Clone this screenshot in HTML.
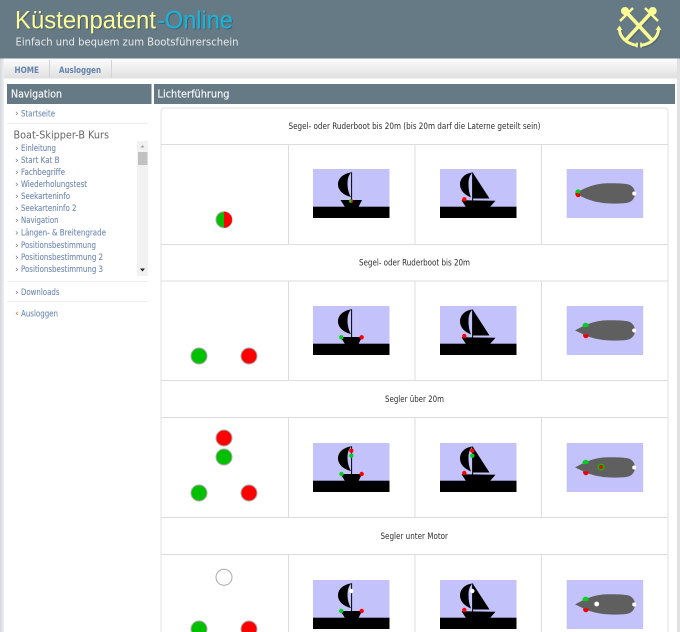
<!DOCTYPE html>
<html lang="de"><head><meta charset="utf-8"><title>Küstenpatent-Online</title>
<style>
html,body{margin:0;padding:0;background:#fff;overflow:hidden}
svg{display:block;position:absolute;left:0;top:0}
text{font-family:"DejaVu Sans","Liberation Sans",sans-serif}
.n{font-size:9px;fill:#7089b2;stroke:#7089b2;stroke-width:.12px}
.t{font-size:9px;fill:#2c2c2c}
.a{font-size:9px;fill:#777}
</style></head><body>
<svg width="680" height="632" viewBox="0 0 680 632" xmlns="http://www.w3.org/2000/svg">
<defs>
<linearGradient id="nav" x1="0" y1="0" x2="0" y2="1"><stop offset="0" stop-color="#fbfbfb"/><stop offset="1" stop-color="#dfdfdf"/></linearGradient>
<linearGradient id="side" x1="0" y1="0" x2="1" y2="0"><stop offset="0" stop-color="#d4d8dc"/><stop offset="1" stop-color="#eef0f1"/></linearGradient>
<g id="side1">
<rect width="76.5" height="49" fill="#c4c2fb"/>
<rect y="37.7" width="76.5" height="11.3" fill="#000"/>
<path d="M27.5 31H49L45.5 38H32Z" fill="#000"/>
<path d="M38.5 3.3C29 5 25 10 25 15.5C25 21.5 31 26.5 38 28C35.5 24 34.5 19 34.5 15C34.5 10 35.5 6 38.5 3.3Z" fill="#000"/>
<path d="M38.6 3.3V31.5" stroke="#000" stroke-width="1"/>
</g>
<g id="side2">
<rect width="76.5" height="49" fill="#c4c2fb"/>
<rect y="37.7" width="76.5" height="11.3" fill="#000"/>
<path d="M21.5 31.3L55.5 31.8L50 38H26Z" fill="#000"/>
<path d="M32.5 3.5C24 4.5 20 10 20 15.5C20 21 24 25.5 31 28.5C29 24 28.5 19.5 28.5 15C28.5 10 29.5 6.5 32.5 3.5Z" fill="#000"/>
<path d="M33 4L49.5 29.5H33Z" fill="#000"/>
<path d="M32.6 3.5V32" stroke="#000" stroke-width="1"/>
</g>
<g id="top">
<rect width="76.5" height="49" fill="#c4c2fb"/>
<path d="M8.3 24.4C13 22 18 19 23 17.5C29 15.5 34 14.5 41 14.3C48 14 56 14.4 61 15.2C65.5 16.2 68.3 20 68.3 24.4C68.3 29 65.5 32.5 61.5 33.6C55 34.8 47 34.7 40 34.3C33 33.8 28 32.5 23 31C18 29.5 13 26.5 8.3 24.4Z" fill="#5f5f5f"/>
<circle cx="67.5" cy="24.5" r="2" fill="#fff"/>
</g>
<g id="bow">
<path d="M19.3 16.8A2.8 2.8 0 0 1 21.8 20.6L16.6 21.4A2.8 2.8 0 0 1 19.3 16.8Z" fill="#00d020"/>
<path d="M16.6 28.4L21.8 28.4A2.8 2.8 0 0 1 19.3 32.2A2.8 2.8 0 0 1 16.6 28.4Z" fill="#f00000"/>
</g>
<g id="bow0">
<path d="M11 20.3A3.8 3.8 0 0 0 8.7 24.3H13.3V20.8Z" fill="#00d020"/>
<path d="M8.7 24.3A3.8 3.8 0 0 0 11 28.3L13.3 27.8V24.3Z" fill="#f00000"/>
</g>
</defs>

<rect width="680" height="632" fill="#fff"/>
<rect y="58" width="4" height="574" fill="url(#side)"/>
<rect x="677" y="58" width="3" height="574" fill="#dfe1e3"/>

<!-- header -->
<rect width="680" height="58.5" fill="#667a85"/>
<text x="16" y="29.5" font-size="25" fill="#2f4450" fill-opacity=".5" textLength="141" lengthAdjust="spacingAndGlyphs" style="font-family:'Liberation Sans',sans-serif">Küstenpatent</text>
<text x="158" y="29.5" font-size="25" fill="#2f4450" fill-opacity=".5" textLength="76" lengthAdjust="spacingAndGlyphs" style="font-family:'Liberation Sans',sans-serif">-Online</text>
<text x="15" y="28.5" font-size="25" fill="#fdfd9b" textLength="141" lengthAdjust="spacingAndGlyphs" style="font-family:'Liberation Sans',sans-serif">Küstenpatent</text>
<text x="157" y="28.5" font-size="25" fill="#16b6dc" textLength="76" lengthAdjust="spacingAndGlyphs" style="font-family:'Liberation Sans',sans-serif">-Online</text>
<text x="15.5" y="45.5" font-size="10.5" fill="#e9eaea" textLength="223" lengthAdjust="spacingAndGlyphs">Einfach und bequem zum Bootsführerschein</text>

<!-- anchors -->
<g fill="none" stroke="#3f525c" stroke-opacity=".45" transform="translate(1.2 1.2)">
<path d="M628 14L653 41M650 14L625 41" stroke-width="3.5"/>
<path d="M619.5 27C619 36 626 44 637.5 45.5M658.5 27C659 36 652 44 640.5 45.5" stroke-width="3"/>
</g>
<g fill="none" stroke="#fbfb96" stroke-linecap="butt">
<path d="M628 14L653 41M650 14L625 41" stroke-width="3.6"/>
<path d="M620 21L633 8M645 8L658 21" stroke-width="2.4"/>
<path d="M619.5 28C619 36 626 44 637.5 45.5M658.5 28C659 36 652 44 640.5 45.5" stroke-width="3"/>
<path d="M637 42.5V47.5M641 42.5V47.5" stroke-width="1.6"/>
</g>
<path d="M616.5 30L619.5 25.5L622.5 30ZM655.5 30L658.5 25.5L661.5 30Z" fill="#fbfb96"/>
<circle cx="625" cy="11" r="4" fill="#fbfb96"/><circle cx="652.7" cy="11" r="4" fill="#fbfb96"/>

<!-- nav -->
<rect x="4" y="59.5" width="673" height="19" fill="url(#nav)"/>
<rect x="49" y="60" width="1" height="18" fill="#d4d4d4"/><rect x="111" y="60" width="1" height="18" fill="#d4d4d4"/>
<text x="14.5" y="73" font-size="9" font-weight="bold" fill="#6482ad" textLength="24.5" lengthAdjust="spacingAndGlyphs">HOME</text>
<text x="59" y="73" font-size="9" font-weight="bold" fill="#6482ad" textLength="42" lengthAdjust="spacingAndGlyphs">Ausloggen</text>

<!-- headings -->
<rect x="7" y="84" width="144.5" height="20" fill="#667a85"/>
<rect x="154" y="84" width="521" height="20" fill="#667a85"/>
<text x="11" y="97.5" font-size="10.5" fill="#f4f5f5" stroke="#f4f5f5" stroke-width=".2" textLength="51" lengthAdjust="spacingAndGlyphs">Navigation</text>
<text x="157.5" y="97.5" font-size="10.5" fill="#f4f5f5" stroke="#f4f5f5" stroke-width=".2" textLength="72" lengthAdjust="spacingAndGlyphs">Lichterführung</text>

<!-- sidebar -->
<rect x="137" y="141" width="11" height="135" fill="#f1f1f1"/>
<rect x="138" y="152" width="9.5" height="13" fill="#c1c1c1"/>
<path d="M142.5 145L140.5 147.5H144.5Z" fill="#a3a3a3"/>
<path d="M140 268.5H145L142.5 271.5Z" fill="#222"/>
<g fill="#eeeeee"><rect x="7" y="123" width="141" height="1"/><rect x="7" y="281" width="141" height="1"/><rect x="7" y="301" width="141" height="1"/></g>
<g class="a">
<text class="a" x="15" y="116">›</text><text class="a" x="15" y="151">›</text><text class="a" x="15" y="163">›</text><text class="a" x="15" y="175">›</text><text class="a" x="15" y="187">›</text><text class="a" x="15" y="199">›</text><text class="a" x="15" y="211">›</text><text class="a" x="15" y="223">›</text><text class="a" x="15" y="235.5">›</text><text class="a" x="15" y="248">›</text><text class="a" x="15" y="260">›</text><text class="a" x="15" y="272">›</text><text class="a" x="15" y="295">›</text>
<text x="15" y="316" font-size="9" fill="#e8622a">‹</text>
</g>
<text class="n" x="21" y="116.5" textLength="34" lengthAdjust="spacingAndGlyphs">Startseite</text>
<text x="13.5" y="138.5" font-size="10.5" fill="#666" textLength="95.5" lengthAdjust="spacingAndGlyphs">Boat-Skipper-B Kurs</text>
<text class="n" x="21" y="151" textLength="35" lengthAdjust="spacingAndGlyphs">Einleitung</text>
<text class="n" x="21" y="163" textLength="38.5" lengthAdjust="spacingAndGlyphs">Start Kat B</text>
<text class="n" x="21" y="175" textLength="44" lengthAdjust="spacingAndGlyphs">Fachbegriffe</text>
<text class="n" x="21" y="187" textLength="66" lengthAdjust="spacingAndGlyphs">Wiederholungstest</text>
<text class="n" x="21" y="199" textLength="49" lengthAdjust="spacingAndGlyphs">Seekarteninfo</text>
<text class="n" x="21" y="211" textLength="55.5" lengthAdjust="spacingAndGlyphs">Seekarteninfo 2</text>
<text class="n" x="21" y="223" textLength="37.5" lengthAdjust="spacingAndGlyphs">Navigation</text>
<text class="n" x="21" y="235.5" textLength="85" lengthAdjust="spacingAndGlyphs">Längen- &amp; Breitengrade</text>
<text class="n" x="21" y="248" textLength="75" lengthAdjust="spacingAndGlyphs">Positionsbestimmung</text>
<text class="n" x="21" y="260" textLength="82" lengthAdjust="spacingAndGlyphs">Positionsbestimmung 2</text>
<text class="n" x="21" y="272" textLength="82" lengthAdjust="spacingAndGlyphs">Positionsbestimmung 3</text>
<text class="n" x="21" y="295" textLength="38.5" lengthAdjust="spacingAndGlyphs">Downloads</text>
<text class="n" x="21" y="316.5" textLength="37" lengthAdjust="spacingAndGlyphs">Ausloggen</text>

<!-- table -->
<path d="M161 632V112Q161 108 165 108H664Q668 108 668 112V632" fill="#fff" stroke="#e2e2e2"/>
<g fill="#dcdcdc">
<rect x="161" y="144" width="507" height="1"/><rect x="161" y="244" width="507" height="1"/>
<rect x="161" y="280.5" width="507" height="1"/><rect x="161" y="380" width="507" height="1"/>
<rect x="161" y="417" width="507" height="1"/><rect x="161" y="517" width="507" height="1"/>
<rect x="161" y="554" width="507" height="1"/>
<rect x="288" y="145" width="1" height="99"/><rect x="414.5" y="145" width="1" height="99"/><rect x="541" y="145" width="1" height="99"/>
<rect x="288" y="281" width="1" height="99"/><rect x="414.5" y="281" width="1" height="99"/><rect x="541" y="281" width="1" height="99"/>
<rect x="288" y="418" width="1" height="99"/><rect x="414.5" y="418" width="1" height="99"/><rect x="541" y="418" width="1" height="99"/>
<rect x="288" y="555" width="1" height="77"/><rect x="414.5" y="555" width="1" height="77"/><rect x="541" y="555" width="1" height="77"/>
</g>
<text class="t" x="288.5" y="129" textLength="252" lengthAdjust="spacingAndGlyphs">Segel- oder Ruderboot bis 20m (bis 20m darf die Laterne geteilt sein)</text>
<text class="t" x="359" y="265.5" textLength="111" lengthAdjust="spacingAndGlyphs">Segel- oder Ruderboot bis 20m</text>
<text class="t" x="385" y="402" textLength="59" lengthAdjust="spacingAndGlyphs">Segler über 20m</text>
<text class="t" x="380.5" y="539" textLength="67.5" lengthAdjust="spacingAndGlyphs">Segler unter Motor</text>

<!-- circles -->
<g stroke="#aaa" stroke-width="1">
<circle cx="224" cy="219.7" r="8" fill="#00c000"/>
<path d="M224 211.7A8 8 0 0 1 224 227.7Z" fill="#f00" stroke="none"/>
<circle cx="199" cy="356" r="8" fill="#00c000"/><circle cx="249" cy="356" r="8" fill="#f00"/>
<circle cx="224" cy="438" r="8" fill="#f00"/><circle cx="224" cy="457" r="8" fill="#00c000"/>
<circle cx="199" cy="493" r="8" fill="#00c000"/><circle cx="249" cy="493" r="8" fill="#f00"/>
<circle cx="224" cy="577.3" r="8" fill="#fff"/>
<circle cx="199" cy="629" r="8" fill="#00c000"/><circle cx="249" cy="629" r="8" fill="#f00"/>
</g>

<!-- row 1 -->
<g transform="translate(313 169)"><use href="#side1"/><path d="M38 30A2 2 0 0 0 38 34Z" fill="#00d020"/><path d="M38 30A2 2 0 0 1 38 34Z" fill="#f00"/><rect x="37" y="31" width="1.5" height="2" fill="#00e020"/></g>
<g transform="translate(440 169)"><use href="#side2"/><circle cx="24.3" cy="30.3" r="2.2" fill="#f00"/></g>
<g transform="translate(566.7 169)"><use href="#top"/><use href="#bow0"/></g>
<!-- row 2 -->
<g transform="translate(313 306)"><use href="#side1"/><circle cx="28.3" cy="31.3" r="2.2" fill="#00d020"/><circle cx="48.7" cy="31.3" r="2.2" fill="#f00"/></g>
<g transform="translate(440 306)"><use href="#side2"/><circle cx="24.3" cy="30" r="2.2" fill="#f00"/></g>
<g transform="translate(566.7 306)"><use href="#top"/><use href="#bow"/></g>
<!-- row 3 -->
<g transform="translate(313 443)"><use href="#side1"/><circle cx="38.3" cy="7.7" r="2.2" fill="#f00"/><circle cx="38.3" cy="12.7" r="2.2" fill="#00d020"/><circle cx="28.5" cy="31" r="2.2" fill="#00d020"/><circle cx="48.7" cy="31" r="2.2" fill="#f00"/></g>
<g transform="translate(440 443)"><use href="#side2"/><circle cx="32.3" cy="7.7" r="2.2" fill="#f00"/><circle cx="32.3" cy="12.7" r="2.2" fill="#00d020"/><circle cx="24.3" cy="30" r="2.2" fill="#f00"/></g>
<g transform="translate(566.7 443)"><use href="#top"/><use href="#bow"/><circle cx="34.3" cy="24" r="3.5" fill="#00c000"/><circle cx="34.3" cy="24" r="2" fill="#f00"/></g>
<!-- row 4 -->
<g transform="translate(313 580)"><use href="#side1"/><circle cx="38.3" cy="11" r="2.2" fill="#fff"/><circle cx="28.3" cy="31" r="2.2" fill="#00d020"/><circle cx="48.7" cy="31" r="2.2" fill="#f00"/></g>
<g transform="translate(440 580)"><use href="#side2"/><circle cx="32.3" cy="11" r="2.2" fill="#fff"/><circle cx="24.3" cy="30" r="2.2" fill="#f00"/></g>
<g transform="translate(566.7 580)"><use href="#top"/><use href="#bow"/><circle cx="30" cy="24" r="2.4" fill="#fff"/></g>
</svg>
</body></html>
